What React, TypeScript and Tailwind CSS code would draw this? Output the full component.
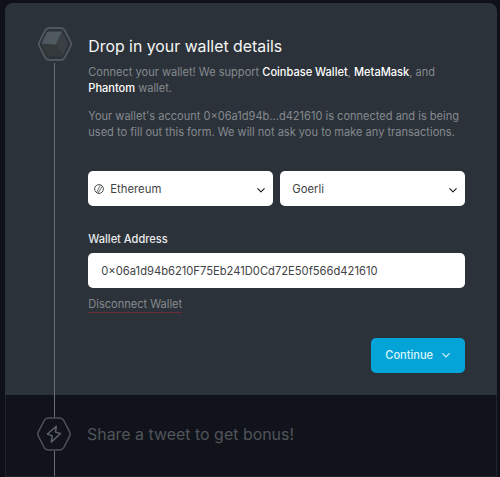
import React from 'react';

const HEXAGON =
  'M11.5 1h11a5 5 0 0 1 4.3 2.5l5.6 10.9a5.2 5.2 0 0 1 0 5.2l-5.6 10.9a5 5 0 0 1-4.3 2.5h-11a5 5 0 0 1-4.3-2.5L1.6 19.6a5.2 5.2 0 0 1 0-5.2L7.2 3.5A5 5 0 0 1 11.5 1z';

const CubeIcon: React.FC = () => (
  <svg className="block h-[34px] w-[34px] shrink-0" viewBox="0 0 34 34" fill="none">
    <path d={HEXAGON} fill="#2c3239" stroke="#50585d" strokeWidth="1.8" />
    <path d="M3.9 16.2 17.5 17.5l7.1 11.1c-.7.7-1.3.9-2.2.9h-11c-1.1 0-2-.5-2.5-1.5L3.9 18.3a3 3 0 0 1 0-2.1z" fill="#34393c" />
    <path d="M23.5 4.5c.5.3.8.7 1.1 1.2l5.2 9.9a3 3 0 0 1 0 2.8l-5.2 10.1-7.1-11z" fill="#393f43" />
    <path d="M11 4.4h13L17.6 17.7 4 16.4c-.1-.7 0-1.1.3-1.7l4.3-8.8A2.8 2.8 0 0 1 11 4.4z" fill="#4f595f" />
  </svg>
);

const BoltIcon: React.FC = () => (
  <svg className="block h-[34px] w-[34px] shrink-0" viewBox="0 0 34 34" fill="none">
    <path d={HEXAGON} stroke="#4e5259" strokeWidth="1.5" />
    <path
      d="M19.3 9.3 10.4 17l4.8 1.9-.9 6.2 9.2-8.6-5-1.4z"
      stroke="#5c6067"
      strokeWidth="1.5"
      strokeLinejoin="round"
    />
  </svg>
);

const EthereumIcon: React.FC = () => (
  <svg className="h-[10px] w-[10px]" viewBox="0 0 10 10" fill="none" stroke="#4b4f52">
    <circle cx="5" cy="5" r="4.4" strokeWidth="1" />
    <path d="M6.5.9 2.6 8.6M8.3 2.3 4 9" strokeWidth=".8" />
  </svg>
);

interface ChevronProps {
  className: string;
}

const Chevron: React.FC<ChevronProps> = ({ className }) => (
  <svg className={className} viewBox="0 0 8 5" fill="none" stroke="currentColor">
    <path d="M.8.7 4 3.9 7.2.7" strokeWidth="1.2" strokeLinecap="round" strokeLinejoin="round" />
  </svg>
);

interface SelectFieldProps {
  label: string;
  icon?: React.ReactNode;
}

const SelectField: React.FC<SelectFieldProps> = ({ label, icon }) => (
  <button
    type="button"
    className={`flex h-[35px] w-[185px] items-center rounded-[5px] bg-white pr-2 text-[11.3px] text-[#3f4346] ${icon ? 'pl-1.5' : 'pl-3'}`}
  >
    {icon}
    <span className={`pt-0.5 ${icon ? 'ml-1.5' : ''}`}>{label}</span>
    <Chevron className="mt-[3px] ml-auto h-[5px] w-2 text-[#25282b]" />
  </button>
);

const App: React.FC = () => {
  return (
    <div className="h-[477px] overflow-hidden bg-[#0e1118] pt-[3px] pr-[3px] pl-[5px] font-['Inter',sans-serif]">
      <section className="flex h-[392px] rounded-t-[8px] bg-[#2c3239]">
        <div className="ml-[32.5px] flex w-[34px] shrink-0 flex-col items-center pt-6">
          <CubeIcon />
          <div className="mt-0.5 w-px flex-1 bg-[#6b7076]" />
        </div>

        <div className="ml-[16.8px] w-[377px] pt-[33px]">
          <h2 className="text-[15.85px] leading-[22px] whitespace-nowrap text-[#f5f6f6]">Drop in your wallet details</h2>
          <p className="mt-[6px] text-[11.05px] leading-4 whitespace-nowrap text-[#848a8f]">
            Connect your wallet! We support <span className="font-medium text-white">Coinbase Wallet</span>,{' '}
            <span className="font-medium text-white">MetaMask</span>, and
            <br />
            <span className="font-medium text-white">Phantom</span> wallet.
          </p>
          <p className="mt-3 text-[11.05px] leading-4 whitespace-nowrap text-[#848a8f]">
            Your wallet's account 0×06a1d94b...d421610 is connected and is being
            <br />
            used to fill out this form. We will not ask you to make any transactions.
          </p>

          <div className="mt-[31px] flex gap-[7px]">
            <SelectField label="Ethereum" icon={<EthereumIcon />} />
            <SelectField label="Goerli" />
          </div>

          <label className="mt-[25px] block text-[11.05px] leading-4 font-medium text-[#e9ebec]">Wallet Address</label>
          <div className="mt-[6px] flex h-[35px] items-center rounded-[5px] bg-white pt-0.5 pl-[13px] text-[11.2px] text-[#3f4346]">
            0×06a1d94b6210F75Eb241D0Cd72E50f566d421610
          </div>
          <div className="mt-2 flex">
            <a className="border-b border-[#6b2c36] text-[11.05px] leading-4 text-[#848a8f]">Disconnect Wallet</a>
          </div>

          <div className="mt-[25px] flex justify-end">
            <button
              type="button"
              className="flex h-[35px] w-[94px] items-center rounded-[5px] bg-[#04a4d8] pl-3.5 text-[11.05px] font-medium text-[#dcf5fb]"
            >
              Continue
              <Chevron className="ml-[9px] h-[5px] w-2" />
            </button>
          </div>
        </div>
      </section>

      <section className="flex h-[82px] border-x border-b border-[#20242b] bg-[#10131a]">
        <div className="ml-[31px] flex w-[34px] shrink-0 flex-col items-center">
          <div className="h-[22px] w-px shrink-0 bg-[#6b7076]" />
          <BoltIcon />
          <div className="w-px flex-1 bg-[#6b7076]" />
        </div>
        <h2 className="mt-[29px] ml-[16px] text-[15.95px] leading-[22px] whitespace-nowrap text-[#50545b]">
          Share a tweet to get bonus!
        </h2>
      </section>
    </div>
  );
};

export default App;
